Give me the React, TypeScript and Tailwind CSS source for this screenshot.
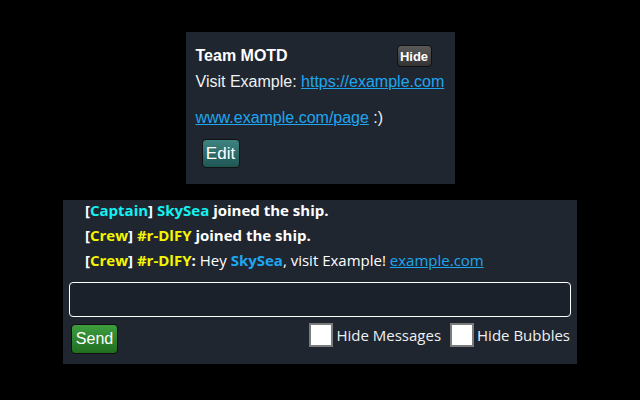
import React, { useState } from 'react';

const motdFont = { fontFamily: '"Liberation Sans", Arial, sans-serif' };

const MotdPanel: React.FC = () => {
  const [hidden, setHidden] = useState(false);

  return (
    <div
      className="w-[269px] h-[152px] bg-[#1f2630] px-[10px] pt-[13px] text-white"
      style={motdFont}
    >
      <div className="flex items-center justify-between h-[22px]">
        <span className="text-[16px] font-bold leading-[18px]">Team MOTD</span>
        <button
          onClick={() => setHidden(!hidden)}
          className="mr-[13px] w-[35px] h-[22px] rounded-[4px] border border-[#111] bg-gradient-to-b from-[#5a5a5a] to-[#333] text-[13px] font-bold text-white leading-none"
        >
          Hide
        </button>
      </div>
      <p className="mt-[6px] text-[16px] leading-[18px] text-[#eef0f2] whitespace-pre-wrap">
        Visit Example: <a className="text-[#1ea6f0] underline">https://example.com</a>
        {'\n\n'}
        <a className="text-[#1ea6f0] underline">www.example.com/page</a> :)
      </p>
      <button className="mt-[12px] ml-[6px] w-[38px] h-[29px] rounded-[4px] border border-[#111] bg-gradient-to-b from-[#3e8482] to-[#1f5654] text-[17px] text-white leading-none">
        Edit
      </button>
    </div>
  );
};

const Checkbox: React.FC<{ label: string }> = ({ label }) => {
  const [checked, setChecked] = useState(false);
  return (
    <label className="flex items-center gap-[3px] cursor-pointer">
      <span
        onClick={() => setChecked(!checked)}
        className="w-[24px] h-[24px] bg-white border-2 border-[#7b7b7b] flex items-center justify-center text-black text-[14px]"
      >
        {checked ? '✓' : ''}
      </span>
      <span className="text-[15px] text-[#eef0f2]">{label}</span>
    </label>
  );
};

const ChatPanel: React.FC = () => {
  const [msg, setMsg] = useState('');

  return (
    <div
      className="mt-[16px] w-[514px] h-[164px] bg-[#1f2630] text-white"
      style={{ fontFamily: '"Open Sans", "Noto Sans", sans-serif' }}
    >
      <div className="flex flex-col gap-[4px] pl-[22px] text-[15px] leading-[21px]">
        <div className="font-bold">
          [<span className="text-[#14f0f0]">Captain</span>]{' '}
          <span className="text-[#14f0f0]">SkySea</span> joined the ship.
        </div>
        <div className="font-bold">
          [<span className="text-[#f5f500]">Crew</span>]{' '}
          <span className="text-[#f5f500]">#r-DlFY</span> joined the ship.
        </div>
        <div>
          <span className="font-bold">
            [<span className="text-[#f5f500]">Crew</span>]{' '}
            <span className="text-[#f5f500]">#r-DlFY</span>:
          </span>{' '}
          Hey <span className="font-bold text-[#1ea6f0]">SkySea</span>, visit Example!{' '}
          <a className="text-[#1ea6f0] underline">example.com</a>
        </div>
      </div>
      <input
        value={msg}
        onChange={(e) => setMsg(e.target.value)}
        className="mt-[11px] mx-[6px] block w-[502px] h-[35px] rounded-[4px] border border-white bg-[#1b212a] px-2 text-white outline-none"
      />
      <div className="flex items-start justify-between pl-[8px] pr-[7px] mt-[6px]">
        <button
          className="mt-[1px] w-[47px] h-[30px] rounded-[4px] border border-[#111] bg-gradient-to-b from-[#3f9e3f] to-[#1f6e1f] text-[16px] text-white leading-none"
          style={motdFont}
        >
          Send
        </button>
        <div className="flex items-center gap-[9px]">
          <Checkbox label="Hide Messages" />
          <Checkbox label="Hide Bubbles" />
        </div>
      </div>
    </div>
  );
};

export default function App() {
  return (
    <div className="w-[640px] h-[400px] bg-black flex flex-col items-center pt-[32px]">
      <MotdPanel />
      <ChatPanel />
    </div>
  );
}
